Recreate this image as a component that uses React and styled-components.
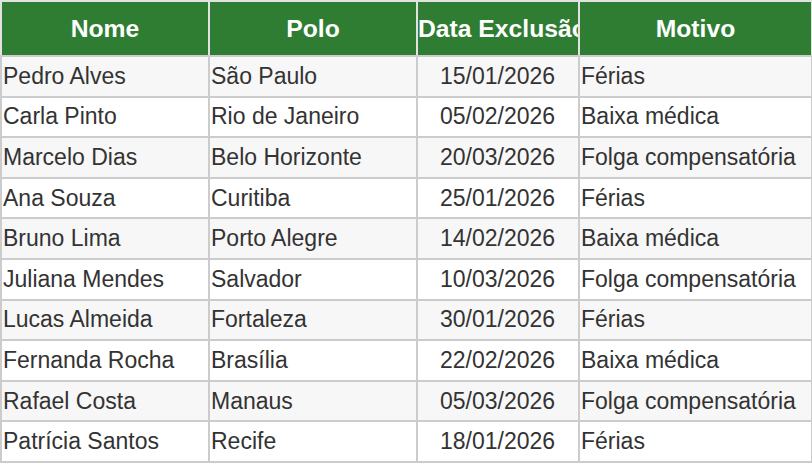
import React from 'react'
import styled, { createGlobalStyle } from 'styled-components'

const GlobalStyle = createGlobalStyle`
  html, body {
    margin: 0;
    padding: 0;
    background: #ffffff;
  }
  body {
    font-family: "Liberation Sans", Arial, sans-serif;
  }
`

const Table = styled.table`
  width: 811px;
  border-collapse: collapse;
  table-layout: fixed;
  border: 2px solid #cccccc;
`

const HeadCell = styled.th`
  background: #2e7d32;
  color: #ffffff;
  font-size: 24.7px;
  font-weight: bold;
  text-align: center;
  height: 53px;
  padding: 0;
  border: 2px solid #e2e2e2;
  border-bottom-color: #cccccc;
  white-space: nowrap;
  overflow: hidden;
`

const Row = styled.tr`
  background: ${props => (props.striped ? '#f7f7f7' : '#ffffff')};
  height: 40.6px;
`

const Cell = styled.td`
  color: #333333;
  font-size: 23px;
  padding: 0 2px 0 1px;
  border: 2px solid #cccccc;
  text-align: ${props => (props.center ? 'center' : 'left')};
  white-space: nowrap;
  overflow: hidden;
`

const columns = [
  { label: 'Nome', width: 208 },
  { label: 'Polo', width: 208 },
  { label: 'Data Exclusão', width: 162 },
  { label: 'Motivo', width: 233 },
]

const rows = [
  ['Pedro Alves', 'São Paulo', '15/01/2026', 'Férias'],
  ['Carla Pinto', 'Rio de Janeiro', '05/02/2026', 'Baixa médica'],
  ['Marcelo Dias', 'Belo Horizonte', '20/03/2026', 'Folga compensatória'],
  ['Ana Souza', 'Curitiba', '25/01/2026', 'Férias'],
  ['Bruno Lima', 'Porto Alegre', '14/02/2026', 'Baixa médica'],
  ['Juliana Mendes', 'Salvador', '10/03/2026', 'Folga compensatória'],
  ['Lucas Almeida', 'Fortaleza', '30/01/2026', 'Férias'],
  ['Fernanda Rocha', 'Brasília', '22/02/2026', 'Baixa médica'],
  ['Rafael Costa', 'Manaus', '05/03/2026', 'Folga compensatória'],
  ['Patrícia Santos', 'Recife', '18/01/2026', 'Férias'],
]

export default function App() {
  return (
    <>
      <GlobalStyle />
      <Table>
        <colgroup>
          {columns.map(c => (
            <col key={c.label} style={{ width: c.width }} />
          ))}
        </colgroup>
        <thead>
          <tr>
            {columns.map(c => (
              <HeadCell key={c.label}>{c.label}</HeadCell>
            ))}
          </tr>
        </thead>
        <tbody>
          {rows.map((r, i) => (
            <Row key={r[0]} striped={i % 2 === 0}>
              <Cell>{r[0]}</Cell>
              <Cell>{r[1]}</Cell>
              <Cell center>{r[2]}</Cell>
              <Cell>{r[3]}</Cell>
            </Row>
          ))}
        </tbody>
      </Table>
    </>
  )
}
